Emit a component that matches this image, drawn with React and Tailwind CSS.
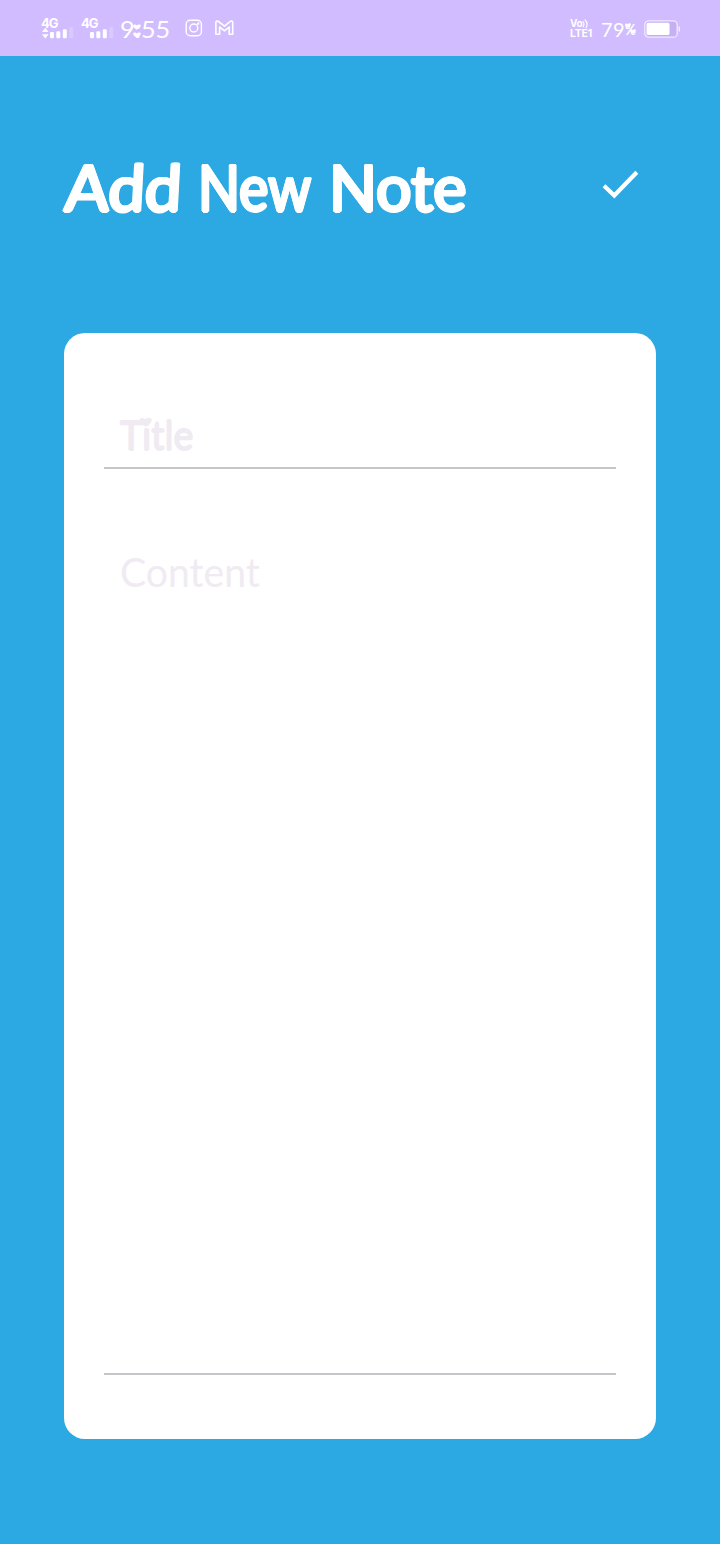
function Signal({ arrows }) {
  return (
    <div className="relative h-[22px] w-8 shrink-0">
      <span className="-mt-px -ml-px block font-['Inter',sans-serif] text-[13px] leading-[12px] font-bold tracking-[-1px]">4G</span>
      <svg className="absolute top-[9px] left-0" width="32" height="13" viewBox="0 0 32 13" fill="#fff">
        {arrows && <path d="M3.3.8 6.600 5H0zM0 7.300h6.600L3.300 11.500z" />}
        <rect x="8" y="5" width="4" height="6.3" rx="1.2" />
        <rect x="14.3" y="4.3" width="4" height="7" rx="1.2" />
        <rect x="20.8" y="2.3" width="4" height="9" rx="1.2" />
        <rect x="27.2" y="0" width="4" height="11.3" rx="1" opacity=".2" />
      </svg>
    </div>
  );
}

function Heart({ className }) {
  return (
    <svg className={className} viewBox="0 0 12 11" preserveAspectRatio="none" fill="currentColor">
      <path d="M5.6 10.6C3 8.4 0 6.5 .3 3.4C.6 .6 4 .1 5.7 2.7C7.5 -.1 11.7 .2 11.7 3.3C11.7 6.3 8.2 8.500 5.6 10.6z" />
    </svg>
  );
}

function StatusBar() {
  return (
    <div className="flex h-14 items-start bg-[#d1bcff] pr-10 pl-[42px] text-white">
      <div className="flex pt-[18px]">
        <Signal arrows />
        <div className="w-2" />
        <Signal />
      </div>
      <div className="relative ml-[6px] w-[51px] pt-[14px]">
        <span className="inline-block origin-left scale-x-[1.05] font-['Lato',sans-serif] text-[24px] leading-[30px] font-normal whitespace-nowrap">9:55</span>
        <Heart className="absolute top-[24px] left-[13px] h-[6px] w-[8px]" />
        <Heart className="absolute top-[32px] left-[13px] h-[6px] w-[8px]" />
      </div>
      <svg className="mt-[19px] ml-[14px]" width="18" height="18" viewBox="0 0 18 18" fill="none" stroke="#fff" strokeWidth="1.4">
        <rect x="1.2" y="1.2" width="15.2" height="15.6" rx="4" />
        <circle cx="8.8" cy="9" r="4" />
        <circle cx="13.2" cy="4.600" r=".6" fill="#fff" />
      </svg>
      <svg className="mt-[20px] ml-[12px]" width="19" height="16" viewBox="0 0 19 16" fill="none" stroke="#fff" strokeWidth="1.6" strokeLinejoin="round">
        <path d="M.9 14.300V2.200Q1 .8 2.700 1L9.500 6.200 15.700 1Q17.600.8 17.700 2.200V14.300H14.200V7L9.500 10.800 4.600 7V14.300z" />
      </svg>
      <div className="flex-1" />
      <div className="relative mt-[19px] w-[24px] font-['Inter',sans-serif] font-bold">
        <span className="block h-[9px] text-[10px] leading-[9px] tracking-[-.3px]">Vo</span>
        <span className="block text-[10.500px] leading-[11px] tracking-[-.2px]">LTE1</span>
        <svg className="absolute top-0 left-[12px]" width="8" height="10" viewBox="0 0 8 10" fill="none" stroke="#fff" strokeWidth="1.100" strokeLinecap="round">
          <path d="M1 2.500Q3 5 1 8M3 .8Q6.500 4.500 4 8.800" />
        </svg>
      </div>
      <div className="relative ml-[7px] flex w-[36px] pt-[14px]">
        <span className="w-6 font-['Lato',sans-serif] text-[20px] leading-[30px] tracking-[.5px] whitespace-nowrap">79</span>
        <span className="origin-left scale-x-[.82] font-['Lato',sans-serif] text-[16px] leading-[30px] font-bold">%</span>
        <Heart className="absolute top-[23px] left-[24px] h-[5px] w-[6px]" />
        <Heart className="absolute top-[29px] left-[29px] h-[5px] w-[6px]" />
      </div>
      <svg className="mt-[20px] ml-[7px]" width="36" height="18" viewBox="0 0 36 18" fill="none">
        <rect x=".8" y=".8" width="32.400" height="16.400" rx="4" fill="#c5b0f3" stroke="#f1eaff" strokeWidth="1.300" />
        <rect x="2.500" y="2.800" width="23" height="12.200" rx="1.500" fill="#fff" />
        <path d="M35.200 6.500v5" stroke="#fff" strokeWidth="1" />
      </svg>
    </div>
  );
}

export default function App() {
  return (
    <main className="flex h-[1544px] w-[720px] flex-col bg-[#2ca8e3]">
      <StatusBar />
      <header className="flex h-[277px] items-start pr-[80px] pl-16 text-white">
        <h1 className="flex pt-[95px] font-['Lato',sans-serif] text-[64px] leading-[72px] font-normal whitespace-nowrap [text-shadow:1.8px_0_#fff,-1.8px_0_#fff,0_1.5px_#fff,0_-1.5px_#fff,1.2px_1.2px_#fff,-1.2px_-1.2px_#fff,1.2px_-1.2px_#fff,-1.2px_1.2px_#fff]">
          <span className="w-[134px]"><span className="inline-block origin-[0_80%] scale-x-[1.02] -skew-x-3">Add</span> </span>
          <span className="w-[131px]"><span className="inline-block origin-left scale-x-[.86]">New</span> </span>
          <span className="w-[140px]"><span className="inline-block origin-left scale-x-[.98]">Note</span></span>
        </h1>
        <svg className="mt-[113px] ml-auto" width="38" height="32" viewBox="0 0 38 32" fill="none" stroke="#fff" strokeWidth="4.200">
          <path d="M2 16.800 12.300 26.500 34.800 3.300" />
        </svg>
      </header>
      <section className="mx-16 flex h-[1106px] flex-col rounded-[21px] bg-white px-10 pt-[72px] text-[#f0ebf2]">
        <div className="relative h-16 border-b-2 border-[#c5c5ca] pl-4 font-['Lato',sans-serif] text-[40px] leading-[60px] font-normal">
          <span className="inline-block origin-left scale-x-[.94] [text-shadow:.7px_0_#f0ebf2,-.7px_0_#f0ebf2,0_.7px_#f0ebf2,0_-.7px_#f0ebf2]">Title</span>
          <Heart className="absolute top-[12px] left-[35px] h-[10px] w-[13px]" />
        </div>
        <div className="h-[906px] border-b-2 border-[#c5c5ca] pt-[72px] pl-4 font-['Lato',sans-serif] text-[40px] leading-[62px] font-normal">
          <span className="inline-block origin-left scale-x-[.98]">Content</span>
        </div>
      </section>
    </main>
  );
}
